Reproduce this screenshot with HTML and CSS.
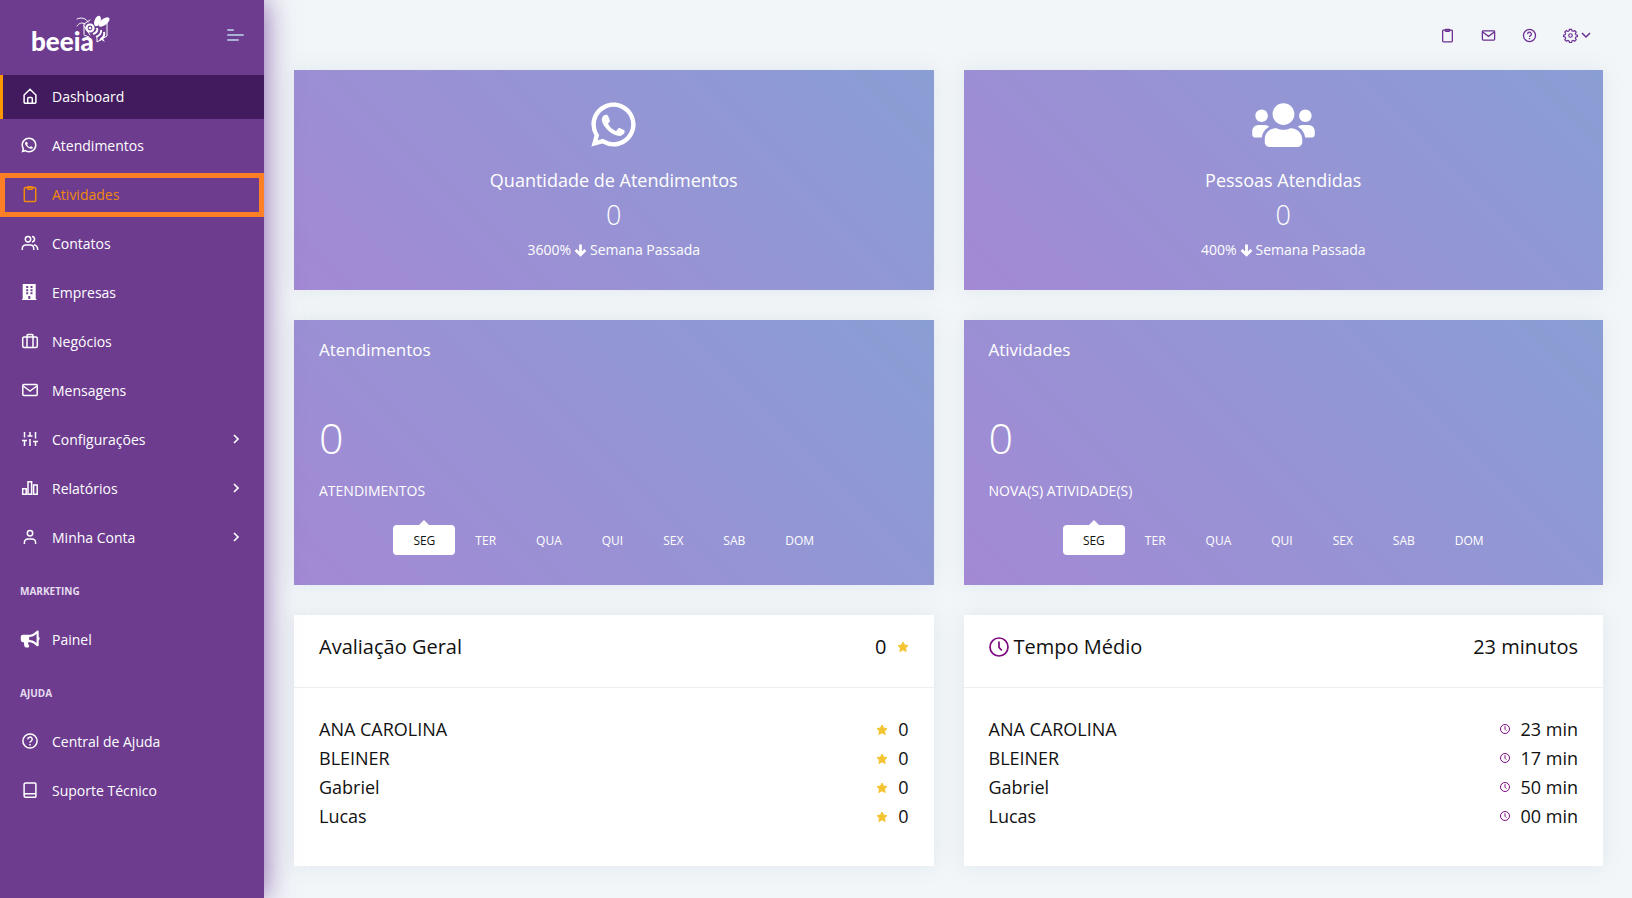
FILE: index.html
```html
<!DOCTYPE html>
<html lang="pt-BR">
<head>
<meta charset="utf-8">
<title>beeia - Dashboard</title>
<link rel="stylesheet" href="styles.css">
</head>
<body>
<svg class="sprite" aria-hidden="true">
  <symbol id="whatsapp" viewBox="0 0 24 24"><path fill="currentColor" d="M7.253 18.494l.724.423A7.953 7.953 0 0 0 12 20a8 8 0 1 0-8-8c0 1.436.377 2.813 1.084 4.024l.422.724-.653 2.401 2.4-.655zM2.004 22l1.352-4.968A9.954 9.954 0 0 1 2 12C2 6.477 6.477 2 12 2s10 4.477 10 10-4.477 10-10 10a9.954 9.954 0 0 1-5.03-1.355L2.004 22z"/><path fill="currentColor" d="M6.9 8.9C7.2 8 8 7.5 8.9 7.6C9.4 7.7 9.5 8 9.7 8.5L10.3 10C10.5 10.5 10.3 10.9 9.5 11.7C10.3 13.2 11.6 14.4 13.2 15C13.9 14.1 14.2 13.4 14.8 13.6L16.7 14.5C17.1 14.7 17.1 15 17 15.5C16.8 16.5 15.6 17.2 14.5 17.15C13.3 17.1 11.3 16.3 9.7 14.8C8 13.2 6.8 11.4 6.7 10.1C6.65 9.6 6.75 9.2 6.9 8.9Z"/></symbol>
  <symbol id="clipboard" viewBox="0 0 20 20"><rect x="4.3" y="3.6" width="11.4" height="13.8" rx="1"/><rect x="7.3" y="2.8" width="5.4" height="2.4" rx="1"/></symbol>
  <symbol id="mail" viewBox="0 0 20 20"><rect x="2.8" y="4.6" width="14.4" height="10.8" rx="1"/><path d="M3.2 6l6.8 5 6.8-5"/></symbol>
  <symbol id="help" viewBox="0 0 20 20"><circle cx="10" cy="10" r="7.1"/><path d="M7.8 8.4a2.2 2.2 0 1 1 3.3 1.8c-.8.4-1.1.8-1.1 1.6M10 13v1.4"/></symbol>
  <symbol id="chevron" viewBox="0 0 10 12"><path d="M3 2l4 4-4 4"/></symbol>
  <symbol id="star" viewBox="0 0 24 24"><path fill="currentColor" stroke="currentColor" stroke-width="2" stroke-linejoin="round" d="M12 2l3.100 6.300 6.900.8-5 4.900 1.300 7-6.300-3.500L5.700 21 7 14 2 9.100l6.900-.8z"/></symbol>
  <symbol id="clock" viewBox="0 0 20 20"><circle cx="10" cy="10" r="9"/><path d="M10 4.500V10.500l2.800 2.800"/></symbol>
  <symbol id="arrow-down" viewBox="0 0 14 14"><path d="M7 1v11M1.700 7L7 12.200 12.300 7"/></symbol>
</svg>
<div class="layout">
  <aside class="sidebar">
    <div class="brand">
      <a href="#" aria-label="beeia">
        <svg class="logo" viewBox="0 0 80 42">
          <text class="logo-text" x="0" y="37">beeia</text>
          <g fill="none" stroke="#fff" stroke-width="1" stroke-linecap="round">
            <path d="M53 20V10l6-4M53 21l5 2M66 24v4l10-6V8M53 12l6 9"/>
            <path d="M57 8c-2-4-7-5-11-3M54 10c-3-2-6-1-8 2"/>
            <circle cx="59" cy="14" r="3.500" stroke-width="2.200"/>
          </g>
          <circle cx="59" cy="14" r="1.300" fill="#fff"/>
          <ellipse cx="66.500" cy="7" rx="3" ry="5.500" transform="rotate(22 66.500 7)" fill="#fff"/>
          <ellipse cx="73" cy="8" rx="3.200" ry="6.500" transform="rotate(52 73 8)" fill="#fff"/>
          <path d="M66 14c1 3-1 5-4 6M70 16c1 3-2 6-5 7M73 18c1 3-1 6-4 8" fill="none" stroke="#fff" stroke-width="2"/>
          <path d="M71 23l3 5-5-3z" fill="#fff"/>
        </svg>
      </a>
      <button class="menu-toggle" type="button" aria-label="Menu"><span></span><span></span><span></span></button>
    </div>
    <nav class="nav">
      <a class="item active" href="#"><svg class="icon" viewBox="0 0 20 20"><path d="M4.100 9L10 3.200 15.900 9v7a1.200 1.200 0 0 1-1.200 1.200H5.300A1.200 1.200 0 0 1 4.100 16zM7.700 17v-4.400a1 1 0 0 1 1-1h2.600a1 1 0 0 1 1 1V17"/></svg>Dashboard</a>
      <a class="item" href="#"><svg class="icon wa"><use href="#whatsapp"/></svg>Atendimentos</a>
      <a class="item marked" href="#"><svg class="icon"><use href="#clipboard"/></svg>Atividades</a>
      <a class="item" href="#"><svg class="icon" viewBox="0 0 20 20"><circle cx="8" cy="6.200" r="2.700"/><path d="M2.300 17v-1.600a3.300 3.300 0 0 1 3.300-3.300h4.800a3.300 3.300 0 0 1 3.300 3.300V17M12 3.500c3.400.4 3.400 5 0 5.400M14 11.800c2.400.5 3.700 2 3.700 5.200"/></svg>Contatos</a>
      <a class="item" href="#"><svg class="icon" viewBox="0 0 20 20"><path fill="currentColor" stroke="none" fill-rule="evenodd" d="M2.700 2h13v15h.8v1H2v-1h.7zM6.200 4v2h2V4zm4.300 0v2h2V4zM6.200 7.200v2h2v-2zm4.300 0v2h2v-2zm-4.300 3v2h2v-2zm4.300 0v2h2v-2zM8.300 14v3h2v-3z"/></svg>Empresas</a>
      <a class="item" href="#"><svg class="icon" viewBox="0 0 20 20"><rect x="2.700" y="6" width="14.600" height="10.400" rx="1.500"/><path d="M7 16V4.600a1 1 0 0 1 1-1h4a1 1 0 0 1 1 1V16"/></svg>Negócios</a>
      <a class="item" href="#"><svg class="icon"><use href="#mail"/></svg>Mensagens</a>
      <a class="item" href="#"><svg class="icon" viewBox="0 0 20 20"><path d="M4.500 3v5.500M4.500 12v5M2 11.500h5M10 3v3.500M10 10v7M7.500 7h5M15.500 3v6.500M15.500 13v4M13 12.500h5"/></svg>Configurações<svg class="chevron"><use href="#chevron"/></svg></a>
      <a class="item" href="#"><svg class="icon" viewBox="0 0 20 20"><path d="M2.700 10.700h3.500v5.600H2.700zM8 3.700h3.600v12.600H8zM13.600 7h3.600v9.300h-3.600z"/></svg>Relatórios<svg class="chevron"><use href="#chevron"/></svg></a>
      <a class="item" href="#"><svg class="icon" viewBox="0 0 20 20"><circle cx="10" cy="6.300" r="2.700"/><path d="M4.400 17v-1.600A3.400 3.400 0 0 1 7.800 12h4.400a3.400 3.400 0 0 1 3.400 3.400V17"/></svg>Minha Conta<svg class="chevron"><use href="#chevron"/></svg></a>
      <h2 class="section">MARKETING</h2>
      <a class="item" href="#"><svg class="icon" viewBox="-24 -48 608 608"><path fill="currentColor" stroke="none" d="M576 240c0-23.630-12.950-44.040-32-55.120V32.010C544 23.260 537.020 0 512 0c-7.120 0-14.190 2.380-19.980 7.020l-85.030 68.030C364.280 109.190 310.660 128 256 128H64c-35.350 0-64 28.650-64 64v96c0 35.350 28.650 64 64 64h33.700c-1.390 10.480-2.180 21.140-2.180 32 0 39.770 9.260 77.350 25.560 110.940 5.190 10.690 16.520 17.060 28.400 17.060h74.280c26.050 0 41.690-29.840 25.900-50.560-16.400-21.520-26.150-48.360-26.150-77.440 0-11.110 1.620-21.790 4.410-32H256c54.660 0 108.280 18.810 150.980 52.950l85.030 68.030a32.023 32.023 0 0 0 19.980 7.020c24.920 0 32-22.780 32-32V295.130C563.050 284.040 576 263.630 576 240zm-96 141.420l-33.050-26.440C392.950 311.780 325.120 288 256 288v-96c69.120 0 136.950-23.780 190.950-66.980L480 98.580v282.840z"/></svg>Painel</a>
      <h2 class="section">AJUDA</h2>
      <a class="item" href="#"><svg class="icon"><use href="#help"/></svg>Central de Ajuda</a>
      <a class="item" href="#"><svg class="icon" viewBox="0 0 20 20"><path d="M15.900 13.600V3.900a1 1 0 0 0-1-1H5.700a1.600 1.600 0 0 0-1.600 1.600v11.200a1.500 1.500 0 0 0 1.500 1.500h10.300M4.300 15a2 2 0 0 1 1.500-1.200h10.100v3.400"/></svg>Suporte Técnico</a>
    </nav>
  </aside>
  <div class="page">
    <header class="topbar">
      <button type="button" aria-label="Atividades"><svg class="icon"><use href="#clipboard"/></svg></button>
      <button type="button" aria-label="Mensagens"><svg class="icon"><use href="#mail"/></svg></button>
      <button type="button" aria-label="Ajuda"><svg class="icon"><use href="#help"/></svg></button>
      <button type="button" aria-label="Configurações"><svg class="icon" viewBox="-1 -1 22 22"><circle cx="10" cy="10" r="2.300"/><path d="M8.600 2h2.800l.5 2 1.600.7 1.900-1.100 2 2-1.100 1.900.7 1.600 2 .5v1.800l-2 .5-.7 1.600 1.100 1.900-2 2-1.900-1.100-1.600.7-.5 2H8.600l-.5-2-1.600-.7-1.900 1.100-2-2 1.100-1.900-.7-1.600-2-.5V9.600l2-.5.7-1.600-1.100-1.900 2-2 1.900 1.100L8.100 4z"/></svg><svg class="caret" viewBox="0 0 10 8"><path d="M1 2l4 4 4-4"/></svg></button>
    </header>
    <main class="cards">
      <section class="card tinted stat">
        <svg class="hero"><use href="#whatsapp"/></svg>
        <h3>Quantidade de Atendimentos</h3>
        <p class="count">0</p>
        <p class="trend">3600% <svg class="arrow"><use href="#arrow-down"/></svg> Semana Passada</p>
      </section>
      <section class="card tinted stat">
        <svg class="hero people" viewBox="0 0 640 512"><path fill="currentColor" d="M96 224c35.300 0 64-28.700 64-64s-28.700-64-64-64-64 28.700-64 64 28.700 64 64 64zm448 0c35.300 0 64-28.700 64-64s-28.700-64-64-64-64 28.700-64 64 28.700 64 64 64zm32 32h-64c-17.600 0-33.500 7.100-45.100 18.600 40.300 22.100 68.900 62 75.100 109.400h66c17.700 0 32-14.300 32-32v-32c0-35.300-28.700-64-64-64zm-256 0c61.900 0 112-50.100 112-112S381.900 32 320 32 208 82.100 208 144s50.100 112 112 112zm76.800 32h-8.300c-20.800 10-43.900 16-68.500 16s-47.600-6-68.500-16h-8.300C179.600 288 128 339.600 128 403.200V432c0 26.500 21.500 48 48 48h288c26.500 0 48-21.500 48-48v-28.800c0-63.600-51.600-115.200-115.200-115.200zm-223.700-13.400C161.500 263.100 145.600 256 128 256H64c-35.300 0-64 28.700-64 64v32c0 17.700 14.300 32 32 32h65.900c6.300-47.400 34.900-87.300 75.200-109.400z"/></svg>
        <h3>Pessoas Atendidas</h3>
        <p class="count">0</p>
        <p class="trend">400% <svg class="arrow"><use href="#arrow-down"/></svg> Semana Passada</p>
      </section>
      <section class="card tinted week">
        <h3>Atendimentos</h3>
        <p class="total">0</p>
        <p class="label">ATENDIMENTOS</p>
        <div class="days">
          <button class="on" type="button">SEG</button><button type="button">TER</button><button type="button">QUA</button><button type="button">QUI</button><button type="button">SEX</button><button type="button">SAB</button><button type="button">DOM</button>
        </div>
      </section>
      <section class="card tinted week">
        <h3>Atividades</h3>
        <p class="total">0</p>
        <p class="label">NOVA(S) ATIVIDADE(S)</p>
        <div class="days">
          <button class="on" type="button">SEG</button><button type="button">TER</button><button type="button">QUA</button><button type="button">QUI</button><button type="button">SEX</button><button type="button">SAB</button><button type="button">DOM</button>
        </div>
      </section>
      <section class="card plain">
        <div class="head"><h3>Avaliação Geral</h3><p>0<svg class="star"><use href="#star"/></svg></p></div>
        <table class="list">
          <tr><th scope="row">ANA CAROLINA</th><td><svg class="star"><use href="#star"/></svg>0</td></tr>
          <tr><th scope="row">BLEINER</th><td><svg class="star"><use href="#star"/></svg>0</td></tr>
          <tr><th scope="row">Gabriel</th><td><svg class="star"><use href="#star"/></svg>0</td></tr>
          <tr><th scope="row">Lucas</th><td><svg class="star"><use href="#star"/></svg>0</td></tr>
        </table>
      </section>
      <section class="card plain">
        <div class="head"><h3><svg class="clock"><use href="#clock"/></svg>Tempo Médio</h3><p>23 minutos</p></div>
        <table class="list">
          <tr><th scope="row">ANA CAROLINA</th><td><svg class="clock-small"><use href="#clock"/></svg>23 min</td></tr>
          <tr><th scope="row">BLEINER</th><td><svg class="clock-small"><use href="#clock"/></svg>17 min</td></tr>
          <tr><th scope="row">Gabriel</th><td><svg class="clock-small"><use href="#clock"/></svg>50 min</td></tr>
          <tr><th scope="row">Lucas</th><td><svg class="clock-small"><use href="#clock"/></svg>00 min</td></tr>
        </table>
      </section>
    </main>
  </div>
</div>
</body>
</html>
```
FILE: styles.css
```css
* { box-sizing: border-box; }
body {
  margin: 0;
  background: #f2f6f9;
  color: #111;
  font-family: "Open Sans", "Noto Sans", sans-serif;
  font-size: 14px;
}
h2, h3, p { margin: 0; font-weight: 400; }
button { border: 0; padding: 0; background: none; color: inherit; font: inherit; cursor: pointer; }
svg { flex: none; fill: none; }
.sprite { display: none; }
.layout { display: flex; min-height: 100vh; }

/* Sidebar */
.sidebar {
  flex: none;
  width: 264px;
  background: #6d3c8f;
  color: #fff;
  box-shadow: 0 0 28px rgba(88, 30, 136, 0.7);
  z-index: 1;
}
.brand {
  display: flex;
  align-items: center;
  justify-content: space-between;
  height: 75px;
  padding: 0 20px 5px 31px;
}
.brand a { display: flex; }
.logo { width: 80px; height: 42px; }
.logo-text { font-family: Lato, sans-serif; font-size: 26px; font-weight: 900; fill: #fff; }
.menu-toggle { display: flex; flex-direction: column; gap: 3px; width: 17px; }
.menu-toggle span { width: 17px; height: 2px; border-radius: 1px; background: #a9b2d6; }
.menu-toggle span:first-child { width: 7px; }
.menu-toggle span:last-child { width: 12px; }
.nav { display: flex; flex-direction: column; gap: 5px; }
.item {
  display: flex;
  align-items: center;
  gap: 12px;
  height: 44px;
  padding: 0 23px 2px 20px;
  color: #fff;
  text-decoration: none;
}
.item.active { background: #411b5e; box-shadow: inset 3px 0 #ff9800; }
.item.marked { color: #f08a0c; outline: 5px solid #ff7f27; outline-offset: -5px; }
.icon { width: 20px; height: 20px; stroke: currentColor; stroke-width: 1.5; }
.icon.wa { width: 18px; height: 18px; margin-right: 2px; stroke: none; }
.chevron { width: 10px; height: 12px; margin-left: auto; stroke: currentColor; stroke-width: 1.7; }
.section {
  height: 48px;
  padding: 5px 20px 0;
  line-height: 43px;
  color: #e6dcf0;
  font-size: 10px;
  font-weight: 700;
}

/* Page */
.page { flex: 1; min-width: 0; }
.topbar {
  display: flex;
  align-items: center;
  justify-content: flex-end;
  gap: 24px;
  height: 70px;
  padding-right: 41px;
  color: #6b2f94;
}
.topbar button { display: flex; align-items: center; gap: 2px; }
.topbar .icon { width: 17px; height: 17px; }
.caret { width: 10px; height: 8px; stroke: currentColor; stroke-width: 1.5; }
.cards {
  display: grid;
  grid-template-columns: 1fr 1fr;
  gap: 30px;
  padding: 0 29px 30px 30px;
}
.card { box-shadow: 0 0 20px rgba(100, 120, 140, 0.12); }
.tinted { background: linear-gradient(45deg, #a389d4, #899ed4); color: #fff; }
.stat { display: flex; flex-direction: column; align-items: center; padding: 30px 25px; }
.hero { width: 53px; height: 53px; margin: -2px 0 16px; }
.hero.people { width: 63px; height: 50px; margin: 0 0 17px; }
.stat h3 { font-size: 18px; line-height: 26px; }
.count { margin: 5px 0 8px; font-size: 27px; font-weight: 300; line-height: 34px; }
.trend { display: flex; align-items: center; gap: 3px; line-height: 20px; }
.arrow { width: 13px; height: 14px; stroke: currentColor; stroke-width: 3; }
.week { padding: 18px 25px 30px; }
.week h3 { font-size: 17px; line-height: 24px; }
.total { margin: 46px 0 13px; font-size: 43px; font-weight: 300; line-height: 60px; }
.label { line-height: 20px; }
.days { display: flex; justify-content: center; margin-top: 24px; }
.days button { position: relative; height: 30px; padding: 0 20px; border-radius: 4px; font-size: 12px; }
.days .on { background: #fff; color: #111; }
.days .on::before {
  content: "";
  position: absolute;
  top: -5px;
  left: 50%;
  margin-left: -5px;
  border: 5px solid transparent;
  border-top: 0;
  border-bottom-color: #fff;
}
.plain { background: #fff; }
.head {
  display: flex;
  justify-content: space-between;
  padding: 17px 25px 25px;
  border-bottom: 1px solid #edeff1;
  font-size: 20px;
  line-height: 30px;
}
.head h3, .head p { display: flex; align-items: center; font-size: 20px; }
.head .star { margin-left: 10px; }
.star { width: 12px; height: 12px; color: #f4c430; }
.clock { width: 20px; height: 20px; margin-right: 5px; stroke: #7d0a80; stroke-width: 1.7; }
.list { width: calc(100% - 50px); margin: 27px 25px 35px; border-collapse: collapse; font-size: 18px; line-height: 29px; }
.list th, .list td { padding: 0; font-weight: 400; text-align: left; }
.list td { text-align: right; }
.list .star { margin-right: 10px; }
.clock-small { width: 10px; height: 10px; margin-right: 10px; stroke: #7d0a80; stroke-width: 2; vertical-align: 2px; }
```
